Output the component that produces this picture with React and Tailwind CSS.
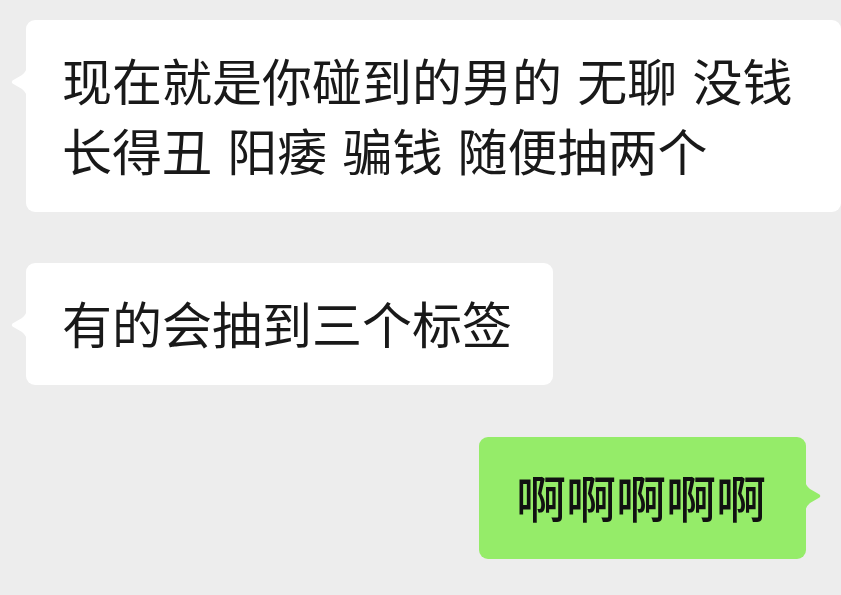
import React from "react";

const FONT = { fontFamily: '"Noto Sans CJK SC", "Noto Sans", sans-serif' };

function TailLeft({ color }) {
  return (
    <svg
      className="absolute left-[-15px] top-[45px]"
      width="16"
      height="34"
      viewBox="0 0 16 34"
    >
      <path
        d="M16 0 Q16 6 11 10 L1.5 15.5 Q0 17 1.5 18.5 L11 24 Q16 28 16 34 Z"
        fill={color}
      />
    </svg>
  );
}

function TailRight({ color }) {
  return (
    <svg
      className="absolute right-[-15px] top-[42px]"
      width="16"
      height="34"
      viewBox="0 0 16 34"
    >
      <path
        d="M0 0 Q0 6 5 10 L14.5 15.5 Q16 17 14.5 18.5 L5 24 Q0 28 0 34 Z"
        fill={color}
      />
    </svg>
  );
}

export default function App() {
  return (
    <div
      className="w-[841px] h-[595px] bg-[#ededed] overflow-hidden flex flex-col pt-[20px] text-[#191919]"
      style={FONT}
    >
      <div className="pl-[26px]">
        <div className="relative w-[815px] bg-white rounded-[9px] pl-[36px] pr-[20px] pt-[24px] pb-[28px] text-[50px] leading-[70px] whitespace-nowrap [word-spacing:4px]">
          <TailLeft color="#ffffff" />
          现在就是你碰到的男的 无聊 没钱
          <br />
          长得丑 阳痿 骗钱 随便抽两个
        </div>
      </div>

      <div className="pl-[26px] mt-[51px] flex">
        <div className="relative bg-white rounded-[9px] pl-[36px] pr-[41px] pt-[24px] pb-[28px] text-[50px] leading-[70px] whitespace-nowrap">
          <TailLeft color="#ffffff" />
          有的会抽到三个标签
        </div>
      </div>

      <div className="pr-[35px] mt-[52px] flex justify-end">
        <div className="relative bg-[#95ec69] rounded-[9px] pl-[37px] pr-[40px] pt-[24px] pb-[28px] text-[50px] leading-[70px] whitespace-nowrap font-medium text-[#111111]">
          <TailRight color="#95ec69" />
          啊啊啊啊啊
        </div>
      </div>
    </div>
  );
}
